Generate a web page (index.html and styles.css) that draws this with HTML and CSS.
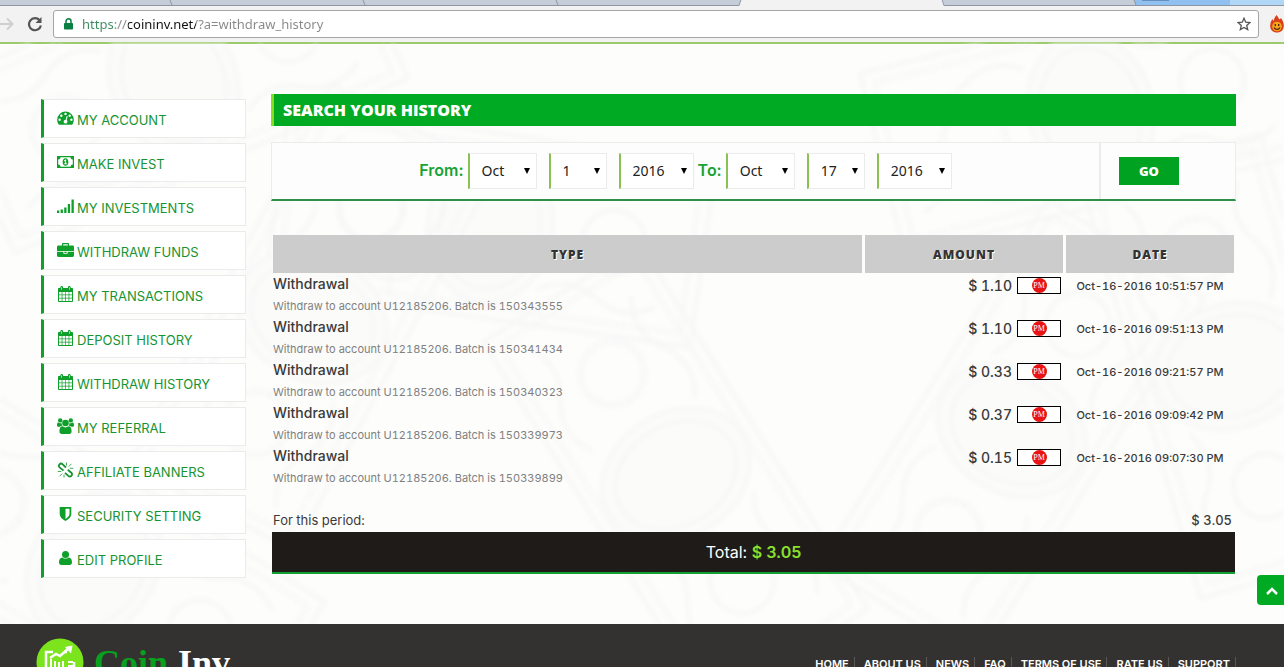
FILE: index.html
```html
<!DOCTYPE html>
<html lang="en">
<head>
  <meta charset="UTF-8">
  <meta name="viewport" content="width=device-width, initial-scale=1">
  <title>Coin Inv</title>
  <link rel="stylesheet" href="styles.css">
</head>
<body>

  <svg class="sprite" aria-hidden="true">
    <symbol id="i-dashboard" viewBox="0 0 17 16">
      <path fill-rule="evenodd" d="M8.500 1.500a8.300 8.300 0 0 0-8.300 8.300c0 1.600.4 3.200 1.300 4.500.2.300.4.400.7.400h12.600c.3 0 .5-.1.700-.4.9-1.300 1.300-2.900 1.300-4.500a8.300 8.300 0 0 0-8.300-8.300zM2.600 8.600a1.200 1.200 0 1 1 0 2.400 1.200 1.200 0 0 1 0-2.400zM4.300 4.500a1.200 1.200 0 1 1 0 2.400 1.200 1.200 0 0 1 0-2.400zM8.500 2.700a1.200 1.200 0 1 1 0 2.400 1.200 1.200 0 0 1 0-2.400zM12.700 4.500a1.200 1.200 0 1 1 0 2.400 1.200 1.200 0 0 1 0-2.400zM14.400 8.600a1.200 1.200 0 1 1 0 2.400 1.200 1.200 0 0 1 0-2.400zM9.700 5.900l1 .3-1 3.900c.6.500.9 1.200.7 2a1.900 1.900 0 1 1-1.700-2.300z"/>
    </symbol>
    <symbol id="i-money" viewBox="0 0 17 16">
      <path fill-rule="evenodd" d="M0 2h17v12H0zM3.500 3.200A2.300 2.300 0 0 1 1.200 5.500v5a2.300 2.300 0 0 1 2.300 2.300h10a2.300 2.300 0 0 1 2.300-2.300v-5a2.300 2.300 0 0 1-2.300-2.300zM8.500 4.200c1.700 0 2.900 1.700 2.900 3.800s-1.200 3.800-2.900 3.800S5.600 10.100 5.600 8s1.200-3.800 2.900-3.800zM8.200 5.500L6.900 6.700l.6.700.6-.5v2.400H7.200v.9h2.700v-.9h-.8V5.500z"/>
    </symbol>
    <symbol id="i-signal" viewBox="0 0 17 16">
      <path d="M0 12.500h2.300V15H0zM3.600 11.500h2.300V15H3.600zM7.200 9.500h2.300V15H7.200zM10.800 6h2.300v9h-2.300zM14.500 1.500h2.300V15h-2.300z"/>
    </symbol>
    <symbol id="i-briefcase" viewBox="0 0 17 16">
      <path fill-rule="evenodd" d="M5 3.500V2c0-.6.400-1 1-1h5c.6 0 1 .4 1 1v1.500h3.600c.8 0 1.400.6 1.400 1.400V9H0V4.900c0-.8.600-1.400 1.400-1.400zM6.200 2.200v1.300h4.600V2.200zM0 9.800h6.400v1.400c0 .3.300.6.600.6h3c.3 0 .6-.3.600-.6V9.800H17v3.700c0 .8-.6 1.400-1.400 1.400H1.400c-.8 0-1.400-.6-1.400-1.400zM7.300 9.800h2.400V11H7.300z"/>
    </symbol>
    <symbol id="i-calendar" viewBox="0 0 17 16">
      <path fill-rule="evenodd" d="M2 2h1.300V1.400C3.300.6 3.900 0 4.700 0s1.400.6 1.400 1.400V2h4.800v-.6c0-.8.600-1.400 1.400-1.400s1.400.6 1.400 1.400V2H15c.6 0 1 .4 1 1v12c0 .6-.4 1-1 1H2c-.6 0-1-.4-1-1V3c0-.6.400-1 1-1zM4.400 1.200v2.600h.6V1.200zM12 1.200v2.600h.6V1.200zM2 6v2.500h2.700V6zM5.400 6v2.500h2.800V6zM8.900 6v2.500h2.700V6zM12.300 6v2.500H15V6zM2 9.200v2.500h2.700V9.200zM5.400 9.200v2.500h2.800V9.200zM8.900 9.200v2.500h2.700V9.200zM12.300 9.200v2.500H15V9.200zM2 12.400V15h2.700v-2.600zM5.400 12.400V15h2.800v-2.600zM8.900 12.400V15h2.700v-2.600zM12.300 12.400V15H15v-2.600z"/>
    </symbol>
    <symbol id="i-users" viewBox="0 0 17 16">
      <circle cx="8.500" cy="5" r="3.300"/>
      <circle cx="3.200" cy="2.400" r="2.200"/>
      <circle cx="13.800" cy="2.400" r="2.200"/>
      <path d="M5.700 8.300c.8.700 1.700 1.100 2.800 1.100s2-.4 2.800-1.100c2.200 0 3.300 2 3.300 4.900 0 1.700-.9 2.800-2.300 2.800H4.700c-1.400 0-2.300-1.100-2.300-2.800 0-2.900 1.100-4.900 3.300-4.900zM1.300 4.600c1.100.8 2.300.9 3.300.5 0 1 .2 1.800.7 2.600-1 0-1.800.4-2.500 1.100H1.500C.6 8.800 0 8.300 0 7.400c0-1.200.2-2.800 1.300-2.800zM15.700 4.600c-1.100.8-2.300.9-3.300.5 0 1-.2 1.800-.7 2.600 1 0 1.800.4 2.500 1.100h1.300c.9 0 1.500-.5 1.500-1.400 0-1.200-.2-2.800-1.300-2.800z"/>
    </symbol>
    <symbol id="i-unlink" viewBox="0 0 17 16">
      <g fill="none" stroke="currentColor" stroke-width="1.800">
        <path d="M6.500 8.600L2.600 5.400C1.600 4.300 1.600 3.200 2.500 2.300c1-1 2.200-.9 3.200 0L9 5.500"/>
        <path d="M8 10.800l3.300 3c1 .9 2.200.9 3.100 0 .9-1 .9-2-.1-3.100l-3.500-2.900"/>
      </g>
      <path fill="none" stroke="currentColor" stroke-width=".8" d="M9.500.5v3M14.500 1.800l-2.700 2.700M16.300 6.300h-3.500M.8 9.500h3.500M2.500 14.300l2.700-2.700M7 15.500v-3"/>
    </symbol>
    <symbol id="i-shield" viewBox="0 0 17 16">
      <path fill-rule="evenodd" d="M2.700 1h11.600v7c0 3-2.400 5.200-5.800 7C5.100 13.200 2.700 11 2.700 8zM8.500 2.800v10.100c2.500-1.500 4-3 4-4.900V2.800z"/>
    </symbol>
    <symbol id="i-user" viewBox="0 0 17 16">
      <circle cx="8.500" cy="4.500" r="3.500"/>
      <path d="M5.400 7.400c.9.800 1.900 1.200 3.100 1.200s2.200-.4 3.100-1.200c2.400.1 3.400 2 3.400 4.800 0 1.700-1 2.800-2.400 2.800H4.400C3 15 2 13.900 2 12.200c0-2.800 1-4.700 3.400-4.800z"/>
    </symbol>
  </svg>

  <header class="browser">
    <svg class="tabs" viewBox="0 0 1284 6" preserveAspectRatio="none" aria-hidden="true">
      <rect width="1284" height="6" fill="#c5cdd8"/>
      <path d="M1134 0h150v6H1136z" fill="#8fc0ef"/>
      <path d="M1230 0h54v6h-54z" fill="#b0d8f6"/>
      <path d="M1142 0h27v1h-27z" fill="#6790bd"/>
      <path d="M0 5.500H739L741 0M942 0l2 5.500h340M170 0l2 5M363 0l2 5M556 0l2 5M1134 0l2 5" fill="none" stroke="#8d96a3"/>
      <path d="M739.500 6L741.500 0H941.500L943.500 6z" fill="#f2f2f2"/>
    </svg>
    <div class="toolbar">
      <svg class="forward" viewBox="0 0 14 14" aria-hidden="true"><path d="M0 7h12M7 1.500L12.500 7 7 12.500" fill="none" stroke="#cfcfcf" stroke-width="2"/></svg>
      <button class="reload" aria-label="Reload">
        <svg viewBox="0 0 16 16"><path d="M12.600 4.300A6 6 0 1 0 13.900 9.500" fill="none" stroke="#555" stroke-width="2.200"/><path d="M14.500 1v6h-6z" fill="#555"/></svg>
      </button>
      <div class="omnibox">
        <svg class="lock" viewBox="0 0 9 12" aria-hidden="true"><path d="M2 5.500V3.300a2.500 2.500 0 0 1 5 0v2.200" fill="none" stroke="#0b8043" stroke-width="1.500"/><rect y="5" width="9" height="6.500" rx=".8" fill="#0b8043"/></svg>
        <input class="url" type="text" aria-label="Address" value="https://coininv.net/?a=withdraw_history">
        <svg class="star" viewBox="0 0 14 14" aria-hidden="true"><path d="M7 1.300l1.700 3.900 4.200.4-3.200 2.800 1 4.200L7 10.400l-3.700 2.200 1-4.200L1.100 5.600l4.200-.4z" fill="none" stroke="#555" stroke-width="1.300"/></svg>
      </div>
      <svg class="flame" viewBox="0 0 14 18" aria-hidden="true"><path d="M6.500 0c2 2 2 3.500 3.200 4.600L11 3c2 3 2.800 5 2.800 7.500C13.800 15 11 17.500 7 17.500S.2 15 .2 11C.2 8 1 6 2.500 4c.3 1 .8 1.500 1.300 1.700C4 3.500 5 2 6.500 0z" fill="#d9401c"/><circle cx="7" cy="11.500" r="4.800" fill="#f7a21b"/><path d="M5.300 9v2M8.700 9v2M4 12.500c1.500 2.500 4.500 2.500 6 0" fill="none" stroke="#4a2208" stroke-width="1.300"/></svg>
    </div>
  </header>

  <main class="page">
    <svg class="notes" viewBox="0 0 1284 580" preserveAspectRatio="xMidYMid slice" aria-hidden="true">
      <defs>
        <g id="note" fill="none" stroke="#f5f6f5" stroke-width="3">
          <rect width="430" height="185"/>
          <rect x="12" y="12" width="406" height="161" stroke-dasharray="3 4" stroke-width="6"/>
          <ellipse cx="215" cy="92" rx="62" ry="78" fill="#fbfbfa"/>
          <ellipse cx="215" cy="92" rx="50" ry="64"/>
          <circle cx="95" cy="92" r="32" stroke-dasharray="4 3" stroke-width="6"/>
          <circle cx="340" cy="92" r="32"/>
          <path d="M40 35q30 20 60 0t60 0M270 150q30-20 60 0t60 0M30 150q30-20 60 0t60 0M270 35q30 20 60 0t60 0"/>
        </g>
      </defs>
      <use href="#note" transform="translate(-60 40) rotate(-24)"/>
      <use href="#note" transform="translate(290 60) rotate(8)"/>
      <use href="#note" transform="translate(130 420) rotate(-62)"/>
      <use href="#note" transform="translate(640 200) rotate(58)"/>
      <use href="#note" transform="translate(820 520) rotate(-58)"/>
      <use href="#note" transform="translate(860 30) rotate(-14)"/>
      <use href="#note" transform="translate(1260 90) rotate(74)"/>
      <use href="#note" transform="translate(-40 330) rotate(32)"/>
    </svg>

    <div class="container">
      <nav class="sidebar">
        <a href="#"><svg><use href="#i-dashboard"/></svg>MY ACCOUNT</a>
        <a href="#"><svg><use href="#i-money"/></svg>MAKE INVEST</a>
        <a href="#"><svg><use href="#i-signal"/></svg>MY INVESTMENTS</a>
        <a href="#"><svg><use href="#i-briefcase"/></svg>WITHDRAW FUNDS</a>
        <a href="#"><svg><use href="#i-calendar"/></svg>MY TRANSACTIONS</a>
        <a href="#"><svg><use href="#i-calendar"/></svg>DEPOSIT HISTORY</a>
        <a href="#"><svg><use href="#i-calendar"/></svg>WITHDRAW HISTORY</a>
        <a href="#"><svg><use href="#i-users"/></svg>MY REFERRAL</a>
        <a href="#"><svg><use href="#i-unlink"/></svg>AFFILIATE BANNERS</a>
        <a href="#"><svg><use href="#i-shield"/></svg>SECURITY SETTING</a>
        <a href="#"><svg><use href="#i-user"/></svg>EDIT PROFILE</a>
      </nav>

      <section class="content">
        <h1>SEARCH YOUR HISTORY</h1>

        <form class="search">
          <div class="dates">
            <label for="month_from">From:</label>
            <div class="selects">
              <select id="month_from" class="month"><option>Oct</option></select>
              <select class="day" aria-label="From day"><option>1</option></select>
              <select class="year" aria-label="From year"><option>2016</option></select>
            </div>
            <label for="month_to">To:</label>
            <div class="selects">
              <select id="month_to" class="month"><option>Oct</option></select>
              <select class="day" aria-label="To day"><option>17</option></select>
              <select class="year" aria-label="To year"><option>2016</option></select>
            </div>
          </div>
          <div class="submit">
            <button type="button" class="go">GO</button>
          </div>
        </form>

        <table class="history">
          <thead>
            <tr><th>TYPE</th><th class="col-amount">AMOUNT</th><th class="col-date">DATE</th></tr>
          </thead>
          <tbody>
            <tr>
              <td><b>Withdrawal</b><small>Withdraw to account U12185206. Batch is 150343555</small></td>
              <td class="amount"><div>$ 1.10 <span class="pm"><i>PM</i></span></div></td>
              <td class="date">Oct-16-2016 10:51:57 PM</td>
            </tr>
            <tr>
              <td><b>Withdrawal</b><small>Withdraw to account U12185206. Batch is 150341434</small></td>
              <td class="amount"><div>$ 1.10 <span class="pm"><i>PM</i></span></div></td>
              <td class="date">Oct-16-2016 09:51:13 PM</td>
            </tr>
            <tr>
              <td><b>Withdrawal</b><small>Withdraw to account U12185206. Batch is 150340323</small></td>
              <td class="amount"><div>$ 0.33 <span class="pm"><i>PM</i></span></div></td>
              <td class="date">Oct-16-2016 09:21:57 PM</td>
            </tr>
            <tr>
              <td><b>Withdrawal</b><small>Withdraw to account U12185206. Batch is 150339973</small></td>
              <td class="amount"><div>$ 0.37 <span class="pm"><i>PM</i></span></div></td>
              <td class="date">Oct-16-2016 09:09:42 PM</td>
            </tr>
            <tr>
              <td><b>Withdrawal</b><small>Withdraw to account U12185206. Batch is 150339899</small></td>
              <td class="amount"><div>$ 0.15 <span class="pm"><i>PM</i></span></div></td>
              <td class="date">Oct-16-2016 09:07:30 PM</td>
            </tr>
          </tbody>
          <tfoot>
            <tr><td colspan="2">For this period:</td><td class="sum">$ 3.05</td></tr>
          </tfoot>
        </table>

        <p class="total">Total: <b>$ 3.05</b></p>
      </section>
    </div>
  </main>

  <footer class="footer">
    <a class="logo" href="#">
      <svg viewBox="0 0 48 48" aria-hidden="true">
        <circle cx="24" cy="24" r="23.500" fill="#7be41c"/>
        <path d="M17 14h-7v22h28V24M31 14h-3" fill="none" stroke="#fff" stroke-width="2.500"/>
        <path d="M14 20l6-4 4 2 9-8" fill="none" stroke="#fff" stroke-width="2.500"/>
        <path d="M36.500 7.500l-1.500 8-6-6.500z" fill="#fff"/>
        <path d="M15 21v12M19 23v10M23 24v9M27 23v10M32 24h5M32 28h5" stroke="#fff" stroke-width="2"/>
      </svg>
      <span class="coin">Coin</span><span>Inv</span>
    </a>
    <nav class="footer-nav">
      <a href="#">HOME</a>
      <a href="#">ABOUT US</a>
      <a href="#">NEWS</a>
      <a href="#">FAQ</a>
      <a href="#">TERMS OF USE</a>
      <a href="#">RATE US</a>
      <a href="#">SUPPORT</a>
    </nav>
  </footer>

  <button class="to-top" aria-label="Back to top">
    <svg viewBox="0 0 12 8"><path d="M1 7l5-5 5 5" fill="none" stroke="#fff" stroke-width="2.500"/></svg>
  </button>

</body>
</html>
```
FILE: styles.css
```css
* {
  box-sizing: border-box;
}

body {
  margin: 0;
  height: 100vh;
  overflow: hidden;
  background: #fdfdfc;
  color: #3a3a3a;
  font-family: Inter, "Open Sans", sans-serif;
  font-size: 13px;
}

a {
  text-decoration: none;
}

.sprite {
  display: none;
}

/* browser bar */
.browser {
  background: #f2f2f2;
  border-bottom: 2px solid #9ccb6c;
}

.tabs {
  display: block;
  width: 100%;
  height: 6px;
}

.toolbar {
  display: flex;
  align-items: center;
  height: 36px;
}

.forward {
  width: 14px;
  height: 14px;
  margin-right: 13px;
}

.reload {
  width: 16px;
  height: 16px;
  padding: 0;
  border: 0;
  background: none;
}

.reload svg {
  display: block;
}

.omnibox {
  flex: 1;
  display: flex;
  align-items: center;
  height: 28px;
  margin: 0 11px 0 10px;
  padding: 0 7px 0 10px;
  background: #fff;
  border: 1px solid #a6a6a6;
  border-radius: 3px;
}

.lock {
  width: 9px;
  height: 12px;
}

.url {
  flex: 1;
  height: 26px;
  margin-left: 9px;
  padding: 0;
  border: 0;
  outline: 0;
  font-family: "Noto Sans", sans-serif;
  font-size: 13px;
  color: transparent;
  background: linear-gradient(90deg, #3b8c5f 32px, #888 32px, #888 46px, #111 46px, #111 114px, #888 114px);
  -webkit-background-clip: text;
  background-clip: text;
}

.star {
  width: 14px;
  height: 14px;
}

.flame {
  width: 14px;
  height: 18px;
}

/* page */
.page {
  position: relative;
}

.notes {
  position: absolute;
  top: 0;
  left: 0;
  width: 100%;
  height: 100%;
  filter: blur(2px);
}

.container {
  position: relative;
  display: flex;
  gap: 25px;
  padding: 50px 48px 46px 41px;
}

.sidebar {
  flex: none;
  display: flex;
  flex-direction: column;
  gap: 5px;
  width: 205px;
  padding-top: 5px;
}

.sidebar a {
  display: flex;
  align-items: center;
  height: 39px;
  padding: 2px 0 0 13px;
  background: #fff;
  border: 1px solid #ebebeb;
  border-left: 3px solid #0fa02c;
  color: #159431;
  font-size: 13px;
}

.sidebar svg {
  width: 17px;
  height: 16px;
  margin: 0 3px 4px 0;
  fill: #0fa02c;
}

.content {
  flex: 1;
}

h1 {
  margin: 0 0 16px;
  padding-left: 9px;
  background: #00aa22;
  border-left: 3px solid #86de1c;
  color: #fff;
  font: 800 16px/32px "Open Sans", sans-serif;
}

.search {
  display: flex;
  height: 59px;
  margin-bottom: 34px;
  background: #fdfdfd;
  border: 1px solid #ececec;
  border-bottom: 2px solid #2a9147;
}

.dates {
  flex: 1;
  display: flex;
  align-items: center;
  justify-content: center;
  gap: 4px;
}

.dates label {
  padding-bottom: 2px;
  color: #17a336;
  font-size: 16px;
  font-weight: 600;
}

.selects {
  display: flex;
  gap: 12px;
}

select {
  appearance: none;
  height: 36px;
  padding: 0 0 2px 12px;
  border: 1px solid #ebebeb;
  border-left: 2px solid #8bc053;
  border-radius: 0;
  background: #fff url("data:image/svg+xml,%3Csvg xmlns='http://www.w3.org/2000/svg' width='6' height='6'%3E%3Cpath d='M0 0h6L3 6z'/%3E%3C/svg%3E") no-repeat right 6px center;
  color: #222;
  font-family: "Noto Sans", sans-serif;
  font-size: 14px;
}

.month {
  width: 69px;
}

.day {
  width: 58px;
}

.year {
  width: 75px;
}

.submit {
  display: flex;
  align-items: center;
  width: 136px;
  padding-left: 18px;
  border-left: 2px solid #ececec;
}

.go {
  width: 60px;
  height: 28px;
  border: 0;
  background: #00a321;
  color: #fff;
  font: 800 13px "Open Sans", sans-serif;
}

/* history */
.history {
  width: 100%;
  border-collapse: separate;
  border-spacing: 0;
  border: 0 solid transparent;
  border-width: 0 2px;
  table-layout: fixed;
  font-variant-numeric: tabular-nums;
}

.history th {
  height: 38px;
  padding: 0;
  background: #ccc;
  background-clip: padding-box;
  color: #333;
  font: 800 12px "Open Sans", sans-serif;
  letter-spacing: 1px;
  text-shadow: 1px 1px 0 #fff;
}

.col-amount,
.col-date {
  border-left: 3px solid transparent;
}

.col-amount {
  width: 201px;
}

.col-date {
  width: 171px;
}

.history td {
  padding: 0;
  vertical-align: top;
}

.history td b {
  display: block;
  font-size: 14px;
  font-weight: 500;
  line-height: 22px;
}

.history td small {
  display: block;
  color: #808080;
  font-size: 11px;
  line-height: 21px;
  padding-top: 1px;
  height: 21px;
}

.amount div {
  display: flex;
  align-items: center;
  justify-content: flex-end;
  gap: 5px;
  height: 24px;
  padding-right: 2px;
  font-size: 14px;
  font-weight: 500;
}

.pm {
  display: flex;
  align-items: center;
  justify-content: center;
  width: 44px;
  height: 17px;
  background: #fff;
  border: 1px solid #000;
}

.pm i {
  width: 15px;
  height: 15px;
  border-radius: 50%;
  background: #e81313;
  color: #fff;
  font: 8px/15px "Liberation Serif", serif;
  text-align: center;
}

.history .date {
  padding-left: 3px;
  font-size: 11px;
  font-weight: 500;
  line-height: 26px;
  text-align: center;
}

.history tfoot td {
  padding-top: 20px;
  font-size: 13px;
  line-height: 24px;
}

.history .sum {
  padding-right: 2px;
  font-weight: 500;
  text-align: right;
}

.total {
  margin: 0 1px;
  background: #1f1b18;
  border-bottom: 2px solid #12a035;
  color: #fff;
  font-size: 16px;
  line-height: 40px;
  text-align: center;
}

.total b {
  color: #8be02c;
  font-weight: 600;
}

/* footer */
.footer {
  position: relative;
  display: flex;
  justify-content: space-between;
  height: 110px;
  padding: 14px 48px 0 36px;
  background: #343230;
}

.logo {
  display: flex;
  gap: 10px;
  height: 48px;
  color: #fff;
  font: 700 36px/50px "Liberation Serif", serif;
}

.logo svg {
  width: 48px;
  height: 48px;
}

.logo .coin {
  color: #07a01f;
}

.footer-nav {
  display: flex;
  margin-top: 19px;
}

.footer-nav a {
  height: 14px;
  padding: 0 5px 0 9px;
  border-right: 1px solid #5a5856;
  color: #fff;
  font-size: 11px;
  font-weight: 600;
  line-height: 14px;
}

.to-top {
  position: fixed;
  right: -3px;
  bottom: 62px;
  width: 30px;
  height: 30px;
  padding: 0;
  border: 0;
  border-radius: 4px;
  background: #00aa22;
}

.to-top svg {
  width: 12px;
  height: 8px;
}
```
